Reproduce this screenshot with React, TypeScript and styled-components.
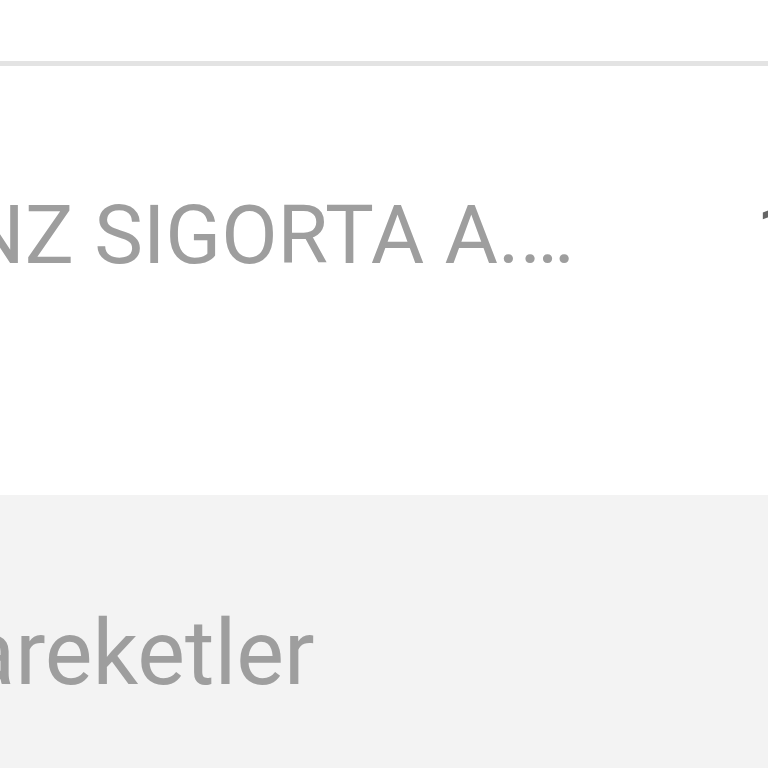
import { FunctionComponent } from "react";
import styled, { createGlobalStyle } from "styled-components";

const GlobalStyle = createGlobalStyle`
  html, body {
    margin: 0;
    padding: 0;
    background: #ffffff;
    overflow: hidden;
  }
`;

// Styled Components
const Screen = styled.div`
  width: 768px;
  height: 768px;
  overflow: hidden;
  display: flex;
  flex-direction: column;
  background-color: #ffffff;
  font-family: "Roboto", "Noto Sans", sans-serif;
`;

const TopBar = styled.div`
  height: 61px;
  flex: none;
  background-color: #ffffff;
`;

const Divider = styled.div`
  height: 5px;
  flex: none;
  background-color: #e3e3e3;
`;

const PolicyRow = styled.div`
  height: 429px;
  flex: none;
  display: flex;
  align-items: flex-start;
  box-sizing: border-box;
  padding-top: 128px;
  margin-left: -252px;
  background-color: #ffffff;
`;

const CompanyName = styled.div`
  flex: none;
  width: 1008px;
  font-size: 82px;
  line-height: 82px;
  color: #9e9e9e;
  white-space: nowrap;
`;

const Amount = styled.div`
  flex: none;
  font-size: 82px;
  line-height: 82px;
  color: #666666;
  white-space: nowrap;
`;

const SectionHeader = styled.div`
  flex: 1;
  box-sizing: border-box;
  padding-top: 114px;
  margin-left: -98px;
  background-color: #f3f3f3;
  font-size: 90px;
  line-height: 90px;
  color: #9e9e9e;
  white-space: nowrap;
`;

// Component
const App: FunctionComponent = () => {
  return (
    <>
      <GlobalStyle />
      <Screen>
        <TopBar />
        <Divider />
        <PolicyRow>
          <CompanyName>ALLIANZ SIGORTA A.…</CompanyName>
          <Amount>1.250,00 TL</Amount>
        </PolicyRow>
        <SectionHeader>Hareketler</SectionHeader>
      </Screen>
    </>
  );
};

export default App;
